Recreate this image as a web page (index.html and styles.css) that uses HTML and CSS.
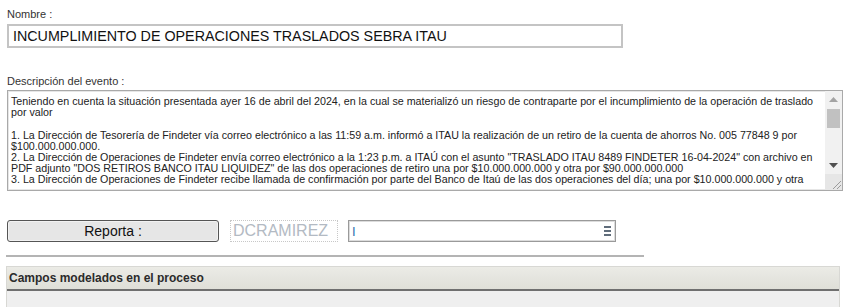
FILE: index.html
```html
<!DOCTYPE html>
<html lang="es">
<head>
<meta charset="utf-8">
<link rel="stylesheet" href="styles.css">
</head>
<body>
<div class="page">
  <div class="field">
    <label class="lbl">Nombre :</label>
    <div class="name-input">INCUMPLIMIENTO DE OPERACIONES TRASLADOS SEBRA ITAU</div>
  </div>

  <div class="field desc-field">
    <label class="lbl">Descripción del evento :</label>
    <div class="textarea">
      <div class="ta-text">
        <div class="ln">Teniendo en cuenta la situación presentada ayer 16 de abril del 2024, en la cual se materializó un riesgo de contraparte por el incumplimiento de la operación de traslado</div>
        <div class="ln">por valor</div>
        <div class="ln">&nbsp;</div>
        <div class="ln">1. La Dirección de Tesorería de Findeter vía correo electrónico a las 11:59 a.m. informó a ITAU la realización de un retiro de la cuenta de ahorros No. 005 77848 9 por</div>
        <div class="ln">$100.000.000.000.</div>
        <div class="ln">2. La Dirección de Operaciones de Findeter envía correo electrónico a la 1:23 p.m. a ITAÚ con el asunto "TRASLADO ITAU 8489 FINDETER 16-04-2024" con archivo en</div>
        <div class="ln">PDF adjunto "DOS RETIROS BANCO ITAU LIQUIDEZ" de las dos operaciones de retiro una por $10.000.000.000 y otra por $90.000.000.000</div>
        <div class="ln">3. La Dirección de Operaciones de Findeter recibe llamada de confirmación por parte del Banco de Itaú de las dos operaciones del día; una por $10.000.000.000 y otra</div>
      </div>
      <div class="sbar">
        <div class="sb-btn"><svg width="9" height="5" viewBox="0 0 9 5"><path d="M0 5 L4.5 0 L9 5 Z" fill="#a3a3a3"/></svg></div>
        <div class="sb-thumb"></div>
        <div class="sb-track"></div>
        <div class="sb-btn"><svg width="9" height="5" viewBox="0 0 9 5"><path d="M0 0 L4.5 5 L9 0 Z" fill="#505050"/></svg></div>
        <div class="sb-grip"><svg width="12" height="12" viewBox="0 0 12 12"><path d="M11 3 L3 11 M11 7 L7 11" stroke="#9a9a9a" stroke-width="1"/></svg></div>
      </div>
    </div>
  </div>

  <div class="report-row">
    <button class="btn-report">Reporta :</button>
    <div class="user-box">DCRAMIREZ</div>
    <div class="search-input">
      <span class="caret">I</span>
      <svg class="menu-ic" width="7" height="10" viewBox="0 0 7 10"><path d="M0 1 H7 M0 5 H7 M0 9 H7" stroke="#2c3e50" stroke-width="1.6"/></svg>
    </div>
  </div>

  <hr class="sep">

  <div class="panel">
    <div class="panel-head">Campos modelados en el proceso</div>
    <div class="panel-body"></div>
  </div>
</div>
</body>
</html>
```

FILE: styles.css
```css
html, body {
  margin: 0;
  padding: 0;
  background: #ffffff;
}
body {
  font-family: "Liberation Sans", Arial, sans-serif;
  color: #222;
}
.page {
  padding: 8px 0 0 7px;
  width: 837px;
}
.field {
  display: flex;
  flex-direction: column;
}
.lbl {
  font-size: 11px;
  line-height: 12px;
  color: #333;
  height: 13px;
}
.name-input {
  margin-top: 3px;
  width: 608px;
  height: 20px;
  border: 2px solid #c4c4c4;
  padding: 0 0 0 4px;
  font-size: 14.3px;
  line-height: 21px;
  color: #111;
  white-space: nowrap;
}
.desc-field {
  margin-top: 27px;
}
.textarea {
  margin-top: 2px;
  display: flex;
  width: 834px;
  height: 99px;
  border: 1px solid #a9a9a9;
  overflow: hidden;
  box-shadow: inset 0 0 0 1px #e6e6e6;
}
.ta-text {
  flex: 1;
  padding: 5px 0 0 3px;
  font-size: 10.7px;
  line-height: 11.2px;
  color: #222;
  overflow: hidden;
}
.ln {
  white-space: nowrap;
  height: 11.2px;
}
.sbar {
  width: 17px;
  display: flex;
  flex-direction: column;
  background: #f1f1f1;
}
.sb-btn {
  height: 17px;
  display: flex;
  align-items: center;
  justify-content: center;
}
.sb-thumb {
  height: 19px;
  margin: 1px 2px;
  background: #c1c1c1;
}
.sb-track {
  flex: 1;
}
.sb-grip {
  height: 16px;
  display: flex;
  justify-content: flex-end;
  align-items: flex-end;
  background: #e6e6e6;
}
.report-row {
  margin-top: 29px;
  display: flex;
  align-items: center;
  height: 22px;
}
.btn-report {
  width: 212px;
  height: 22px;
  border: 1px solid #555;
  border-radius: 3px;
  background: #e6e6e6;
  box-shadow: inset 0 0 0 1px #f2f2f2;
  font-family: "Liberation Sans", Arial, sans-serif;
  font-size: 14px;
  color: #111;
  padding: 0;
}
.user-box {
  margin-left: 11px;
  width: 104px;
  height: 20px;
  border: 1px dotted #c8c8c8;
  font-size: 16px;
  line-height: 20px;
  color: #b3bac3;
  padding-left: 2px;
  box-sizing: content-box;
}
.search-input {
  margin-left: 10px;
  width: 259px;
  height: 20px;
  border: 1px solid #9a9a9a;
  box-shadow: inset 0 0 0 1px #dcdcdc;
  display: flex;
  align-items: center;
  justify-content: space-between;
  padding: 0 4px 0 3px;
}
.caret {
  font-size: 13px;
  color: #2a6fb0;
}
.menu-ic {
  display: block;
}
.sep {
  margin: 13px 0 0 -1px;
  width: 638px;
  height: 0;
  border: 0;
  border-top: 2px solid #b4b4b4;
}
.panel {
  margin-top: 9px;
  margin-left: -1px;
  width: 832px;
  border: 1px solid #d8d8d4;
  border-bottom: 0;
}
.panel-head {
  height: 22px;
  background: linear-gradient(#ebebe6, #dfdfd8);
  border-bottom: 2px solid #6f6f6f;
  font-size: 12px;
  font-weight: bold;
  line-height: 23px;
  padding-left: 2px;
  color: #2b2b2b;
}
.panel-body {
  height: 30px;
  background: #efefef;
}
```
